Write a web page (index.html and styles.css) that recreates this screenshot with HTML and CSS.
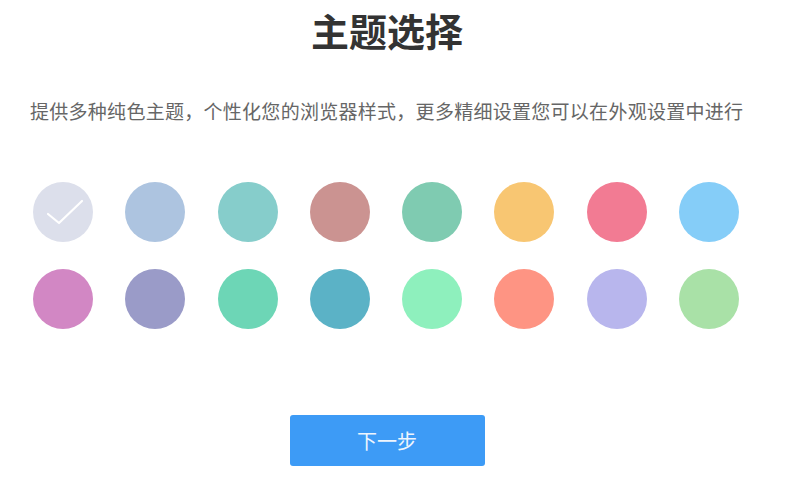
FILE: index.html
```html
<!DOCTYPE html>
<html lang="zh-CN">
<head>
    <meta charset="UTF-8">
    <meta name="viewport" content="width=device-width, initial-scale=1.0">
    <title>主题选择</title>
    <link rel="stylesheet" href="styles.css">
</head>
<body>
<div class="page">
    <h1 class="title">主题选择</h1>
    <p class="intro">提供多种纯色主题，个性化您的浏览器样式，更多精细设置您可以在外观设置中进行</p>
    <div class="swatches">
        <div class="swatch selected" style="background-color: #dcdfeb">
            <svg width="60" height="60" viewBox="0 0 60 60">
                <polyline points="15,32 26,41 49,19" fill="none" stroke="#fff" stroke-width="2.2" stroke-linecap="round" stroke-linejoin="round"/>
            </svg>
        </div>
        <div class="swatch" style="background-color: #adc4e0"></div>
        <div class="swatch" style="background-color: #86cdcb"></div>
        <div class="swatch" style="background-color: #cb9391"></div>
        <div class="swatch" style="background-color: #7fcbb1"></div>
        <div class="swatch" style="background-color: #f8c672"></div>
        <div class="swatch" style="background-color: #f27b93"></div>
        <div class="swatch" style="background-color: #85cdf8"></div>

        <div class="swatch" style="background-color: #d287c4"></div>
        <div class="swatch" style="background-color: #9a9bc8"></div>
        <div class="swatch" style="background-color: #6dd6b6"></div>
        <div class="swatch" style="background-color: #5bb2c6"></div>
        <div class="swatch" style="background-color: #8ef0bd"></div>
        <div class="swatch" style="background-color: #fe9483"></div>
        <div class="swatch" style="background-color: #b8b6ed"></div>
        <div class="swatch" style="background-color: #a9e1a7"></div>
    </div>
    <button class="next">下一步</button>
</div>
</body>
</html>
```

FILE: styles.css
```css
body {
    margin: 0;
    background-color: #fff;
    font-family: "Noto Sans CJK SC", "Noto Sans", sans-serif;
    color: #333;
}

.page {
    width: 714px;
    margin-left: 30px;
    padding-top: 11px;
}

.title {
    margin: 0;
    font-size: 38px;
    line-height: 38px;
    font-weight: bold;
    text-align: center;
    color: #333;
}

.intro {
    margin: 52px 0 0;
    font-size: 19px;
    line-height: 19px;
    letter-spacing: 0.28px;
    color: #666;
    white-space: nowrap;
}

.swatches {
    display: grid;
    grid-template-columns: repeat(8, 60px);
    column-gap: 32.3px;
    row-gap: 27px;
    margin: 62px 0 0 3px;
}

.swatch {
    width: 60px;
    height: 60px;
    border-radius: 50%;
    cursor: pointer;
}

.swatch svg {
    display: block;
}

.next {
    display: block;
    width: 195px;
    height: 51px;
    margin: 86px auto 0;
    border: none;
    border-radius: 3px;
    background-color: #3d9bf6;
    color: #eef5fd;
    font-family: inherit;
    font-size: 20px;
    cursor: pointer;
}
```
